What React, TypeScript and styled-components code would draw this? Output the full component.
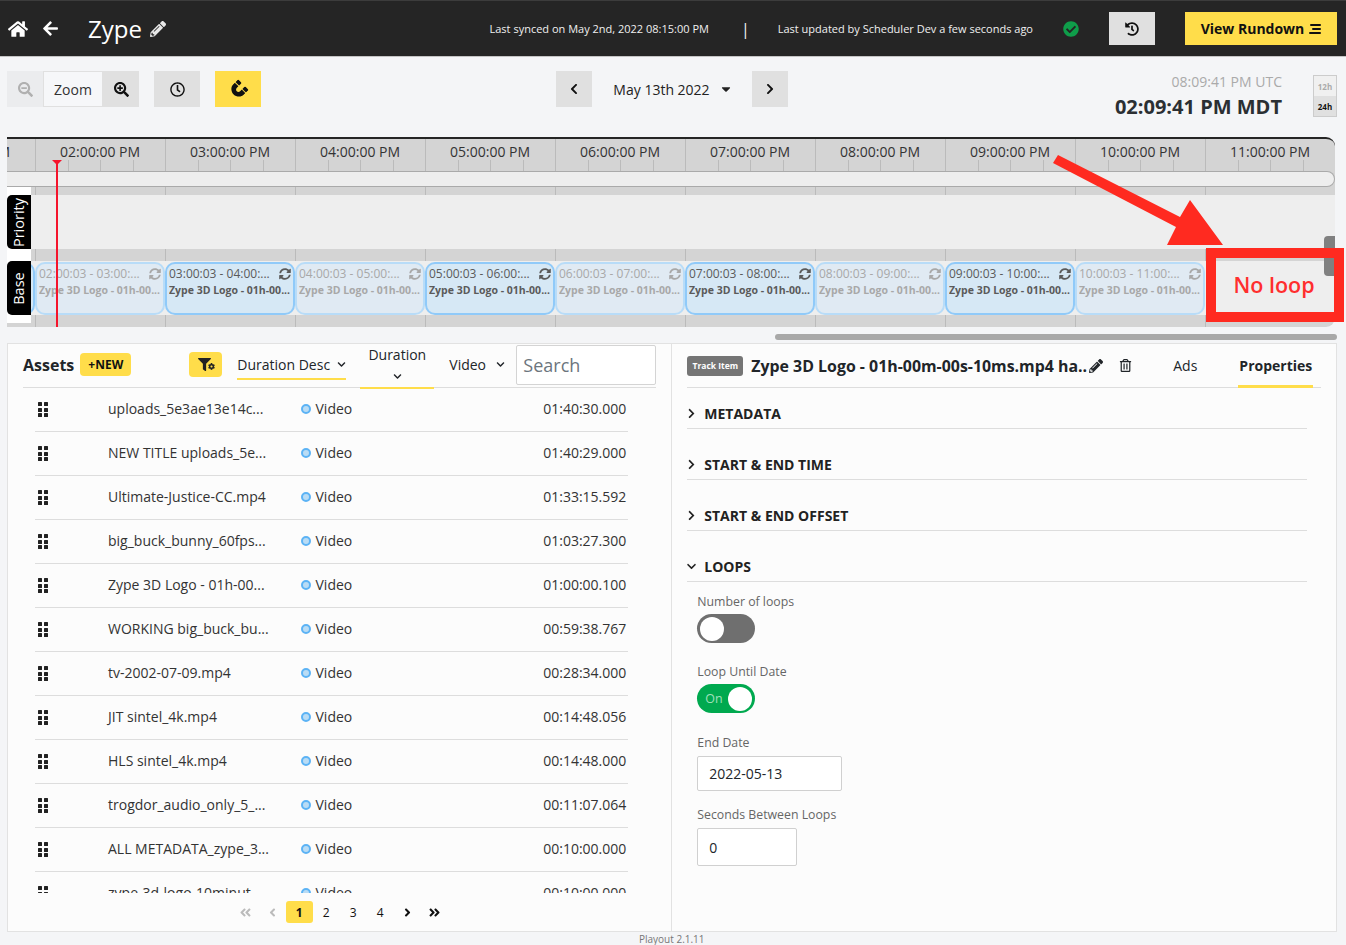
import React from 'react';
import styled, { createGlobalStyle } from 'styled-components';
import {
	FaHome,
	FaArrowLeft,
	FaPencilAlt,
	FaSearchMinus,
	FaSearchPlus,
	FaRegClock,
	FaMagnet,
	FaHistory,
	FaCheckCircle,
	FaChevronLeft,
	FaChevronRight,
	FaChevronDown,
	FaCaretDown,
	FaSyncAlt,
	FaFilter,
	FaCog,
	FaRegTrashAlt,
	FaAngleLeft,
	FaAngleRight,
	FaAngleDoubleLeft,
	FaAngleDoubleRight,
} from 'react-icons/fa';

const YELLOW = '#ffdd4a';

const GlobalStyle = createGlobalStyle`
	html, body {
		margin: 0;
		padding: 0;
		background: #f4f5f7;
		font-family: "Open Sans", "Liberation Sans", sans-serif;
		color: #212529;
	}
	* { box-sizing: border-box; }
`;

const Page = styled.div`
	position: relative;
	width: 1346px;
	height: 945px;
	overflow: hidden;
`;

/* top bar */
const Header = styled.header`
	display: flex;
	align-items: center;
	height: 57px;
	padding: 0 9px 0 8px;
	background: #252525;
	border-top: 1px solid #3c3c3c;
	border-bottom: 1px solid #c4c4c4;
	color: #fff;
`;

const HomeLink = styled.span`
	display: flex;
	font-size: 20px;
	margin-right: 14px;
`;

const BackLink = styled.span`
	display: flex;
	font-size: 17px;
	margin-right: 29px;
`;

const ProjectName = styled.span`
	font-size: 24px;
	line-height: 30px;
	margin-right: 8px;
`;

const EditIcon = styled(FaPencilAlt)`
	font-size: 16px;
	color: #e8e8e8;
`;

const SyncInfo = styled.div`
	display: flex;
	align-items: center;
	margin-left: auto;
	font-size: 11px;
	color: #f0f0f0;
`;

const Separator = styled.span`
	margin: 0 28px 0 32px;
	font-size: 16px;
`;

const SavedIcon = styled(FaCheckCircle)`
	margin: 0 30px;
	font-size: 16px;
	color: #0f9d4a;
`;

const HistoryButton = styled.button`
	display: flex;
	align-items: center;
	justify-content: center;
	width: 46px;
	height: 33px;
	margin-right: 30px;
	border: 0;
	padding: 0;
	background: #e0e0e0;
	color: #111;
	font-size: 14px;
`;

const RundownButton = styled.button`
	display: flex;
	align-items: center;
	justify-content: center;
	gap: 5px;
	width: 152px;
	height: 33px;
	border: 0;
	padding: 0;
	background: ${YELLOW};
	color: #111;
	font-family: inherit;
	font-weight: 700;
	font-size: 14px;
`;

const RundownLines = styled.span`
	display: flex;
	flex-direction: column;
	gap: 2px;
	align-items: flex-end;
	span {
		display: block;
		height: 2px;
		background: #111;
		border-radius: 1px;
	}
	span:nth-child(1) { width: 11px; }
	span:nth-child(2) { width: 9px; }
	span:nth-child(3) { width: 12px; }
`;

/* toolbar */
const Toolbar = styled.div`
	display: grid;
	grid-template-columns: 1fr auto 1fr;
	height: 80px;
	padding: 14px 9px 0 7px;
`;

const ToolGroup = styled.div`
	display: flex;
	align-items: flex-start;
`;

const ToolButton = styled.button<{ $tone?: 'grey' | 'yellow' | 'muted'; $w?: number }>`
	display: flex;
	align-items: center;
	justify-content: center;
	width: ${(p) => p.$w ?? 46}px;
	height: 36px;
	border: 0;
	padding: 0;
	font-size: 15px;
	background: ${(p) => (p.$tone === 'yellow' ? YELLOW : p.$tone === 'muted' ? '#ebecee' : '#e0e0e0')};
	color: ${(p) => (p.$tone === 'muted' ? '#b0b0b0' : '#111')};
`;

const ZoomLabel = styled.div`
	display: flex;
	align-items: center;
	justify-content: center;
	width: 60px;
	height: 36px;
	border: 1px solid #e0e0e0;
	background: #f6f7f9;
	font-size: 14px;
	color: #333;
`;

const Spacer = styled.span`
	width: 15px;
`;

const DateNav = styled.div`
	display: flex;
	align-items: flex-start;
`;

const DateLabel = styled.div`
	display: flex;
	align-items: center;
	justify-content: center;
	gap: 9px;
	width: 160px;
	height: 36px;
	padding-left: 2px;
	font-size: 14px;
	color: #222;
`;

const ClockArea = styled.div`
	display: flex;
	justify-content: flex-end;
	align-items: flex-start;
`;

const ClockText = styled.div`
	text-align: right;
	margin-right: 31px;
	margin-top: 1px;
`;

const UtcTime = styled.div`
	font-size: 14px;
	line-height: 20px;
	color: #aaa;
`;

const LocalTime = styled.div`
	font-size: 20px;
	line-height: 29px;
	font-weight: 700;
	color: #2b2f33;
`;

const HourToggle = styled.div`
	width: 24px;
	height: 42px;
	margin-top: 4px;
	border: 1px solid #ccc;
	display: flex;
	flex-direction: column;
`;

const HourOption = styled.span<{ $active?: boolean }>`
	flex: 1;
	display: flex;
	align-items: center;
	justify-content: center;
	font-size: 8px;
	font-weight: 700;
	background: ${(p) => (p.$active ? '#e0e0e0' : '#f0f0f0')};
	color: ${(p) => (p.$active ? '#111' : '#aaa')};
`;

/* timeline */
const Timeline = styled.section`
	position: relative;
	width: 1328px;
	height: 190px;
	margin-left: 7px;
	overflow: hidden;
	border-top: 2px solid #252525;
	border-radius: 0 9px 9px 0;
	background-color: #d4d4d4;
	background-image: linear-gradient(to right, #bbb 0 1px, transparent 1px);
	background-size: 130px 100%;
	background-position: 28px 0;
`;

const Ruler = styled.div`
	display: flex;
	height: 32px;
	margin-left: -102px;
`;

const RulerCell = styled.div`
	position: relative;
	flex: 0 0 130px;
	padding: 3px 0 0 25px;
	font-size: 14px;
	line-height: 19px;
	color: #333;
	white-space: nowrap;
`;

const Tick = styled.i<{ $at: number }>`
	position: absolute;
	bottom: 0;
	left: ${(p) => p.$at}px;
	width: 1px;
	height: 11px;
	background: #bbb;
`;

const ScrollBand = styled.div`
	height: 16px;
	margin-bottom: 8px;
	background: #eee;
	border-top: 1px solid #aaa;
	border-bottom: 1px solid #aaa;
	border-right: 1px solid #aaa;
	border-radius: 0 9px 9px 0;
`;

const EmptyTrack = styled.div`
	height: 54px;
	margin-bottom: 12px;
	background: #eee;
`;

const BaseTrack = styled.div`
	display: flex;
	height: 54px;
	margin-left: -102px;
	padding-top: 1px;
	background: #eee;
	width: 1430px;
`;

const Block = styled.div<{ $dim: boolean }>`
	flex: 0 0 130px;
	min-width: 0;
	height: 53px;
	padding: 1px 2px 0;
	overflow: hidden;
	border: 2px solid ${(p) => (p.$dim ? '#b8dcf8' : '#90caf9')};
	border-radius: 10px;
	background: ${(p) => (p.$dim ? '#e0eaf3' : '#d6e8f5')};
	color: ${(p) => (p.$dim ? '#a8a8a8' : '#5a5a5a')};
`;

const BlockTop = styled.div`
	display: flex;
	align-items: center;
	justify-content: space-between;
	font-size: 12px;
	line-height: 17px;
	white-space: nowrap;
`;

const BlockTitle = styled.div`
	font-size: 10.5px;
	line-height: 16px;
	font-weight: 700;
	white-space: nowrap;
	overflow: hidden;
`;

const BlockLoop = styled(FaSyncAlt)`
	flex: none;
	font-size: 12px;
`;

const LabelRail = styled.div`
	position: absolute;
	left: 0;
	top: 48px;
	width: 24px;
	height: 136px;
	padding-top: 8px;
	background: #fff;
`;

const TrackLabel = styled.div<{ $gap?: number }>`
	display: flex;
	align-items: center;
	justify-content: center;
	width: 24px;
	height: 54px;
	padding-right: 1px;
	margin-bottom: ${(p) => p.$gap ?? 0}px;
	background: #000;
	border-radius: 5px 0 0 5px;
	color: #fff;
	font-size: 14.5px;
	span {
		transform: rotate(-90deg);
	}
`;

const Playhead = styled.div`
	position: absolute;
	left: 49px;
	top: 21px;
	bottom: 0;
	width: 2px;
	background: #f5142c;
	&::before {
		content: '';
		position: absolute;
		top: 0;
		left: -4px;
		border-left: 5px solid transparent;
		border-right: 5px solid transparent;
		border-top: 5px solid #f5142c;
	}
`;

const VerticalThumb = styled.div`
	position: absolute;
	right: 0;
	top: 97px;
	width: 11px;
	height: 40px;
	background: #808080;
	border-radius: 4px 0 0 4px;
`;

const HorizontalThumb = styled.div`
	width: 562px;
	height: 6px;
	margin: 7px 0 3px 775px;
	background: #a8a8a8;
	border-radius: 3px;
`;

/* annotation drawn on the screenshot */
const CalloutArrow = styled.svg`
	position: absolute;
	left: 1050px;
	top: 150px;
`;

const CalloutBox = styled.div`
	position: absolute;
	left: 1206px;
	top: 248px;
	width: 138px;
	height: 74px;
	border: 10px solid #ff2a20;
	display: flex;
	align-items: center;
	justify-content: center;
	padding: 0 2px 1px 0;
	color: #ff2e2e;
	font-size: 21.5px;
	font-weight: 600;
`;

/* lower panels */
const Panels = styled.main`
	display: flex;
	width: 1330px;
	height: 589px;
	margin-left: 7px;
	background: #fcfcfc;
	border: 1px solid #e2e2e2;
`;

const AssetsPanel = styled.div`
	flex: 0 0 664px;
	border-right: 1px solid #e2e2e2;
	display: flex;
	flex-direction: column;
`;

const AssetsBar = styled.div`
	position: relative;
	display: flex;
	align-items: center;
	height: 44px;
	margin: 0 15px;
	padding-bottom: 2px;
	border-bottom: 1px solid #ddd;
`;

const AssetsTitle = styled.span`
	font-size: 16px;
	font-weight: 700;
	margin-right: 6px;
`;

const NewBadge = styled.span`
	display: flex;
	align-items: center;
	justify-content: center;
	width: 51px;
	height: 23px;
	margin-right: 58px;
	border-radius: 4px;
	background: ${YELLOW};
	font-size: 12px;
	font-weight: 700;
	color: #111;
`;

const FilterButton = styled.span`
	position: relative;
	display: flex;
	align-items: center;
	padding-left: 9px;
	width: 33px;
	height: 25px;
	margin-right: 15px;
	border-radius: 4px;
	background: ${YELLOW};
	font-size: 13px;
	color: #222;
	svg + svg {
		position: absolute;
		left: 19px;
		top: 11px;
		font-size: 7px;
	}
`;

const SortSelect = styled.span`
	display: flex;
	align-items: center;
	justify-content: space-between;
	width: 109px;
	height: 29px;
	margin-top: 2px;
	margin-right: 14px;
	border-bottom: 2px solid ${YELLOW};
	font-size: 14px;
	svg {
		font-size: 9px;
	}
`;

const SortField = styled.span`
	display: flex;
	flex-direction: column;
	align-items: center;
	justify-content: space-between;
	width: 74px;
	height: 44px;
	padding-bottom: 6px;
	margin-top: 4px;
	margin-right: 15px;
	border-bottom: 2px solid ${YELLOW};
	font-size: 14px;
	line-height: 19px;
	svg {
		font-size: 9px;
	}
`;

const TypeSelect = styled.span`
	display: flex;
	align-items: center;
	gap: 10px;
	width: 67px;
	font-size: 14px;
	svg {
		font-size: 9px;
	}
`;

const SearchInput = styled.input`
	width: 140px;
	height: 40px;
	margin-top: 1px;
	padding: 0 6px;
	border: 1px solid #d4d4d4;
	border-radius: 2px;
	background: #fff;
	font-family: inherit;
	font-size: 18px;
	&::placeholder {
		color: #6c757d;
		opacity: 1;
	}
`;

const AssetList = styled.div`
	height: 505px;
	overflow: hidden;
	padding: 0 43px 0 27px;
`;

const AssetRow = styled.div`
	display: flex;
	align-items: center;
	height: 44px;
	padding-bottom: 2px;
	border-bottom: 1px solid #ddd;
	font-size: 14px;
	color: #333;
`;

const Grip = styled.span`
	display: grid;
	grid-template-columns: 4px 4px;
	gap: 1.5px 2px;
	margin: 2px 0 0 3px;
	width: 70px;
	i {
		display: block;
		width: 4px;
		height: 4px;
		background: #222;
		border-radius: 0.5px;
	}
`;

const AssetName = styled.span`
	width: 193px;
	white-space: nowrap;
`;

const AssetType = styled.span`
	display: flex;
	align-items: center;
	gap: 4.5px;
	flex: 1;
`;

const TypeDot = styled.i`
	display: block;
	width: 10px;
	height: 10px;
	border-radius: 50%;
	border: 2px solid #5cb3f5;
	background: #b9dcf5;
`;

const Duration = styled.span`
	margin-right: 2px;
`;

const Pager = styled.nav`
	display: flex;
	justify-content: center;
	align-items: center;
	padding-top: 8px;
`;

const PageItem = styled.span<{ $active?: boolean; $muted?: boolean }>`
	display: flex;
	align-items: center;
	justify-content: center;
	width: 27px;
	height: 22px;
	border-radius: 3px;
	font-size: 12px;
	font-weight: ${(p) => (p.$active ? 700 : 400)};
	background: ${(p) => (p.$active ? YELLOW : 'transparent')};
	color: ${(p) => (p.$muted ? '#bbb' : '#111')};
	svg {
		font-size: 13px;
	}
`;

const DetailPanel = styled.div`
	flex: 1;
	padding-left: 15px;
`;

const DetailBar = styled.div`
	display: flex;
	align-items: center;
	width: 634px;
	height: 44px;
	border-bottom: 1px solid #ddd;
`;

const TrackBadge = styled.span`
	display: flex;
	align-items: center;
	justify-content: center;
	width: 56px;
	height: 20px;
	margin-right: 8px;
	border-radius: 3px;
	background: #757575;
	color: #fff;
	font-size: 8.5px;
	font-weight: 700;
`;

const DetailTitle = styled.span`
	width: 338px;
	font-size: 15.9px;
	font-weight: 700;
	white-space: nowrap;
`;

const DetailPencil = styled(FaPencilAlt)`
	font-size: 14px;
	margin-right: 16px;
`;

const DetailTrash = styled(FaRegTrashAlt)`
	font-size: 13px;
	margin-right: 41px;
`;

const Tab = styled.span<{ $active?: boolean }>`
	display: flex;
	align-items: center;
	justify-content: center;
	height: 44px;
	margin-bottom: -1px;
	padding-top: 1px;
	font-size: 14px;
	font-weight: ${(p) => (p.$active ? 700 : 400)};
	width: ${(p) => (p.$active ? '75px' : '24px')};
	margin-right: ${(p) => (p.$active ? '0' : '41px')};
	border-bottom: 3px solid ${(p) => (p.$active ? YELLOW : 'transparent')};
`;

const SectionHead = styled.div<{ $first?: boolean }>`
	display: flex;
	align-items: center;
	gap: 8px;
	width: 620px;
	height: 29px;
	margin-top: ${(p) => (p.$first ? 12 : 22)}px;
	padding-bottom: 1px;
	border-bottom: 1px solid #ddd;
	font-size: 14px;
	font-weight: 700;
	color: #222;
	svg {
		font-size: 11px;
		width: 9px;
	}
`;

const LoopFields = styled.div`
	padding: 11px 0 0 10px;
`;

const FieldLabel = styled.div`
	font-size: 12.3px;
	line-height: 17px;
	color: #666;
	margin-bottom: 4px;
`;

const Field = styled.div<{ $after: number }>`
	margin-bottom: ${(p) => p.$after}px;
`;

const Switch = styled.div<{ $on?: boolean }>`
	display: flex;
	align-items: center;
	justify-content: ${(p) => (p.$on ? 'space-between' : 'flex-start')};
	width: 58px;
	height: 29px;
	padding: 0 3px 0 ${(p) => (p.$on ? 8 : 3)}px;
	border-radius: 15px;
	background: ${(p) => (p.$on ? '#00a94f' : '#6f6f6f')};
	color: #9fe0bb;
	font-size: 12.5px;
`;

const Knob = styled.i`
	display: block;
	width: 24px;
	height: 24px;
	border-radius: 50%;
	background: #fff;
`;

const TextBox = styled.input<{ $w: number; $h: number }>`
	display: block;
	width: ${(p) => p.$w}px;
	height: ${(p) => p.$h}px;
	margin-top: 5px;
	padding: 0 11px;
	border: 1px solid #d0d0d0;
	border-radius: 2px;
	background: #fff;
	font-family: inherit;
	font-size: 14px;
	color: #212529;
`;

const Version = styled.div`
	width: 1346px;
	padding-left: 639px;
	font-size: 10px;
	line-height: 14px;
	color: #777;
`;

const hours = ['01', '02', '03', '04', '05', '06', '07', '08', '09', '10', '11'];

const blocks = [
	['01:00:03 - 02:00:...', false],
	['02:00:03 - 03:00:...', true],
	['03:00:03 - 04:00:...', false],
	['04:00:03 - 05:00:...', true],
	['05:00:03 - 06:00:...', false],
	['06:00:03 - 07:00:...', true],
	['07:00:03 - 08:00:...', false],
	['08:00:03 - 09:00:...', true],
	['09:00:03 - 10:00:...', false],
	['10:00:03 - 11:00:...', true],
] as const;

const assets = [
	['uploads_5e3ae13e14c...', '01:40:30.000'],
	['NEW TITLE uploads_5e...', '01:40:29.000'],
	['Ultimate-Justice-CC.mp4', '01:33:15.592'],
	['big_buck_bunny_60fps...', '01:03:27.300'],
	['Zype 3D Logo - 01h-00...', '01:00:00.100'],
	['WORKING big_buck_bu...', '00:59:38.767'],
	['tv-2002-07-09.mp4', '00:28:34.000'],
	['JIT sintel_4k.mp4', '00:14:48.056'],
	['HLS sintel_4k.mp4', '00:14:48.000'],
	['trogdor_audio_only_5_...', '00:11:07.064'],
	['ALL METADATA_zype_3...', '00:10:00.000'],
	['zype-3d-logo-10minut...', '00:10:00.000'],
];

const App = () => {
	return (
		<Page>
			<GlobalStyle />
			<Header>
				<HomeLink><FaHome /></HomeLink>
				<BackLink><FaArrowLeft /></BackLink>
				<ProjectName>Zype</ProjectName>
				<EditIcon />
				<SyncInfo>
					<span>Last synced on May 2nd, 2022 08:15:00 PM</span>
					<Separator>|</Separator>
					<span>Last updated by Scheduler Dev a few seconds ago</span>
					<SavedIcon />
				</SyncInfo>
				<HistoryButton><FaHistory /></HistoryButton>
				<RundownButton>
					View Rundown
					<RundownLines><span /><span /><span /></RundownLines>
				</RundownButton>
			</Header>

			<Toolbar>
				<ToolGroup>
					<ToolButton $tone="muted" $w={36}><FaSearchMinus /></ToolButton>
					<ZoomLabel>Zoom</ZoomLabel>
					<ToolButton $w={36}><FaSearchPlus /></ToolButton>
					<Spacer />
					<ToolButton><FaRegClock /></ToolButton>
					<Spacer />
					<ToolButton $tone="yellow"><FaMagnet style={{ transform: 'rotate(45deg)' }} /></ToolButton>
				</ToolGroup>
				<DateNav>
					<ToolButton $w={36}><FaChevronLeft size={12} /></ToolButton>
					<DateLabel>May 13th 2022 <FaCaretDown size={14} /></DateLabel>
					<ToolButton $w={36}><FaChevronRight size={12} /></ToolButton>
				</DateNav>
				<ClockArea>
					<ClockText>
						<UtcTime>08:09:41 PM UTC</UtcTime>
						<LocalTime>02:09:41 PM MDT</LocalTime>
					</ClockText>
					<HourToggle>
						<HourOption>12h</HourOption>
						<HourOption $active>24h</HourOption>
					</HourToggle>
				</ClockArea>
			</Toolbar>

			<Timeline>
				<Ruler>
					{hours.map((h) => (
						<RulerCell key={h}>
							{h}:00:00 PM
							<Tick $at={33} />
							<Tick $at={65} />
							<Tick $at={98} />
						</RulerCell>
					))}
				</Ruler>
				<ScrollBand />
				<EmptyTrack />
				<BaseTrack>
					{blocks.map(([time, dim]) => (
						<Block key={time} $dim={dim}>
							<BlockTop>
								{time}
								<BlockLoop />
							</BlockTop>
							<BlockTitle>Zype 3D Logo - 01h-00...</BlockTitle>
						</Block>
					))}
				</BaseTrack>
				<LabelRail>
					<TrackLabel $gap={12}><span>Priority</span></TrackLabel>
					<TrackLabel><span>Base</span></TrackLabel>
				</LabelRail>
				<Playhead />
				<VerticalThumb />
			</Timeline>
			<HorizontalThumb />

			<Panels>
				<AssetsPanel>
					<AssetsBar>
						<AssetsTitle>Assets</AssetsTitle>
						<NewBadge>+NEW</NewBadge>
						<FilterButton><FaFilter /><FaCog /></FilterButton>
						<SortSelect>Duration Desc <FaChevronDown /></SortSelect>
						<SortField>Duration <FaChevronDown /></SortField>
						<TypeSelect>Video <FaChevronDown /></TypeSelect>
						<SearchInput placeholder="Search" />
					</AssetsBar>
					<AssetList>
						{assets.map(([name, time]) => (
							<AssetRow key={name}>
								<Grip><i /><i /><i /><i /><i /><i /></Grip>
								<AssetName>{name}</AssetName>
								<AssetType><TypeDot />Video</AssetType>
								<Duration>{time}</Duration>
							</AssetRow>
						))}
					</AssetList>
					<Pager>
						<PageItem $muted><FaAngleDoubleLeft /></PageItem>
						<PageItem $muted><FaAngleLeft /></PageItem>
						<PageItem $active>1</PageItem>
						<PageItem>2</PageItem>
						<PageItem>3</PageItem>
						<PageItem>4</PageItem>
						<PageItem><FaAngleRight /></PageItem>
						<PageItem><FaAngleDoubleRight /></PageItem>
					</Pager>
				</AssetsPanel>

				<DetailPanel>
					<DetailBar>
						<TrackBadge>Track Item</TrackBadge>
						<DetailTitle>Zype 3D Logo - 01h-00m-00s-10ms.mp4 ha..</DetailTitle>
						<DetailPencil />
						<DetailTrash />
						<Tab>Ads</Tab>
						<Tab $active>Properties</Tab>
					</DetailBar>
					<SectionHead $first><FaChevronRight />METADATA</SectionHead>
					<SectionHead><FaChevronRight />START &amp; END TIME</SectionHead>
					<SectionHead><FaChevronRight />START &amp; END OFFSET</SectionHead>
					<SectionHead><FaChevronDown />LOOPS</SectionHead>
					<LoopFields>
						<Field $after={20}>
							<FieldLabel>Number of loops</FieldLabel>
							<Switch><Knob /></Switch>
						</Field>
						<Field $after={21}>
							<FieldLabel>Loop Until Date</FieldLabel>
							<Switch $on>On<Knob /></Switch>
						</Field>
						<Field $after={15}>
							<FieldLabel>End Date</FieldLabel>
							<TextBox $w={145} $h={35} defaultValue="2022-05-13" />
						</Field>
						<Field $after={0}>
							<FieldLabel>Seconds Between Loops</FieldLabel>
							<TextBox $w={100} $h={38} defaultValue="0" />
						</Field>
					</LoopFields>
				</DetailPanel>
			</Panels>
			<Version>Playout 2.1.11</Version>

			<CalloutArrow width="180" height="100" viewBox="0 0 180 100">
				<polygon points="8,5 3,13 126,77 117,95 173,95 140,50 130,67" fill="#ff2a20" />
			</CalloutArrow>
			<CalloutBox>No loop</CalloutBox>
		</Page>
	);
};

export default App;
